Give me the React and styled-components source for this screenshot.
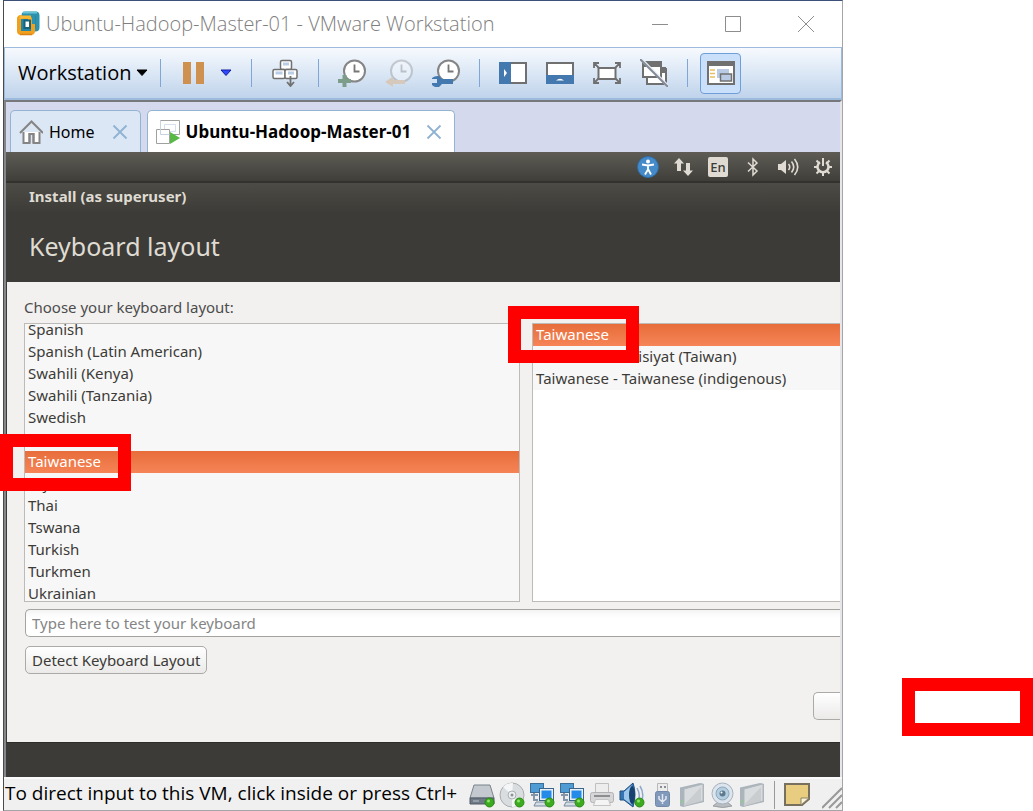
import React from "react";
import styled, { createGlobalStyle, css } from "styled-components";

const UI = '"Open Sans", "Noto Sans", sans-serif';
const GUEST = '"Noto Sans", "Open Sans", sans-serif';

const GlobalStyle = createGlobalStyle`
  *, *::before, *::after { box-sizing: border-box; }
  body { margin: 0; background: #fff; font-family: ${UI}; color: #000; }
  button, input { font: inherit; margin: 0; }
  svg { display: block; flex: none; }
`;

const Page = styled.main`
  display: grid;
  grid-template-columns: minmax(0, 1fr) 190px;
  min-height: 100vh;
  padding-left: 3px;
`;

const Window = styled.section`
  display: flex;
  flex-direction: column;
  border: 1px solid #a3a5a8;
  border-top-color: #3c5078;
  border-left-color: #4a4a4a;
`;

const TitleBar = styled.header`
  display: flex;
  align-items: center;
  height: 46px;
  padding-left: 12px;
`;

const Title = styled.h1`
  flex: 1;
  margin: 0 0 0 6px;
  font-size: 20px;
  line-height: 28px;
  font-weight: 300;
  color: #808080;
  white-space: nowrap;
`;

const bareButton = css`
  display: flex;
  align-items: center;
  justify-content: center;
  padding: 0;
  border: 0;
  background: none;
  color: inherit;
`;

const CaptionButton = styled.button`
  ${bareButton}
  width: 73px;
  height: 46px;
`;

const Toolbar = styled.div`
  display: flex;
  align-items: center;
  height: 53px;
  border: 1px solid #9dbbdc;
  border-width: 1px 1px 2px;
  background: linear-gradient(#f7fafe, #dbe7f5 50%, #bfd3eb);
`;

const ToolGroup = styled.div`
  display: flex;
  align-items: center;
  gap: ${(p) => p.$gap || 19}px;
  height: 28px;
  padding: 0 19px;
  border-right: 1px solid #7ea6d6;
`;

const MenuGroup = styled(ToolGroup)`
  padding: 0 12px 0 13px;
`;

const ToolButton = styled.button`
  ${bareButton}
  flex: none;
`;

const MenuButton = styled(ToolButton)`
  gap: 5px;
  font-size: 20px;
  line-height: 28px;
`;

const PressedButton = styled(ToolButton)`
  width: 41px;
  height: 41px;
  margin-left: 12px;
  border: 1px solid #6f9fd8;
  border-radius: 4px;
  background: #c9dffa;
`;

const Client = styled.div`
  display: flex;
  flex: 1;
  flex-direction: column;
  border-top: 2px solid #77787c;
  border-left: 2px solid #85868a;
  border-right: 2px solid #e6e6e8;
`;

const TabStrip = styled.nav`
  display: flex;
  align-items: flex-end;
  gap: 6px;
  height: 50px;
  padding-left: 4px;
  background: #d4d9ed;
`;

const Tab = styled.div`
  display: flex;
  align-items: center;
  height: 42px;
  padding: 0 12px 0 8px;
  border: 1px solid #93b3d2;
  border-bottom: 0;
  border-radius: 5px 5px 0 0;
  background: ${(p) => (p.$active ? "#fff" : "#dbe7f5")};
`;

const TabLabel = styled.a`
  margin: 0 ${(p) => (p.$active ? 15 : 17)}px 0 6px;
  font-family: ${GUEST};
  font-size: ${(p) => (p.$active ? 17 : 16)}px;
  line-height: 24px;
  font-weight: ${(p) => (p.$active ? 700 : 400)};
  color: #000;
  text-decoration: none;
  white-space: nowrap;
`;

const GuestScreen = styled.div`
  display: flex;
  flex: 1;
  flex-direction: column;
  font-family: ${GUEST};
  font-size: 15px;
  line-height: 22px;
  color: #3c3b37;
  background: #3c3b37;
`;

const GuestPanel = styled.div`
  display: flex;
  align-items: center;
  justify-content: flex-end;
  gap: 13px;
  height: 31px;
  padding-right: 6px;
  border-bottom: 2px solid #33322e;
  background: linear-gradient(#5e5c55, #3f3e39);
`;

const InstallerHeader = styled.div`
  height: 99px;
  padding: 2px 23px 0;
  background: linear-gradient(#4c4b45, #3c3b37 30px);
  color: #dfdbd2;
`;

const InstallerTitle = styled.div`
  font-weight: 700;
`;

const StepTitle = styled.h2`
  margin: 20px 0 0;
  font-size: 25px;
  line-height: 38px;
  font-weight: 400;
`;

const InstallerBody = styled.div`
  display: flex;
  flex: 1;
  flex-direction: column;
  align-items: flex-start;
  margin-left: 1px;
  padding: 14px 0 0 17px;
  background: #f2f1f0;
`;

const FieldLabel = styled.div`
  margin-bottom: 5px;
  color: #4c4c4c;
`;

const Lists = styled.div`
  display: grid;
  grid-template-columns: 496px minmax(0, 1fr);
  gap: 12px;
  width: 100%;
`;

const ListColumn = styled.div`
  position: relative;
  height: 279px;
`;

const Option = styled.li`
  display: flex;
  align-items: center;
  height: 22px;
  padding: 0 3px 2px;
  line-height: 20px;
  white-space: nowrap;
  background: ${(p) =>
    p["aria-selected"] ? "linear-gradient(#e76d3b, #f68456)" : "#f7f7f7"};
  color: ${(p) => (p["aria-selected"] ? "#fff" : "#3c3b37")};
`;

const ListBox = styled.ul`
  height: 100%;
  margin: 0;
  padding: 0;
  list-style: none;
  border: 1px solid #bdbbb8;
  background: #fff;
  ${(p) => p.$open && "border-right: 0;"}
  ${(p) =>
    p.$scrolled &&
    css`
      ${Option}:first-child { height: 17px; align-items: flex-end; }
      ${Option}:last-child { height: 18px; align-items: flex-start; }
    `}
`;

const Marker = styled.div`
  width: 131px;
  height: ${(p) => p.$height || 57}px;
  border: 13px solid #f00;
  pointer-events: none;
`;

const ListMarker = styled(Marker)`
  position: absolute;
  left: -24px;
  top: ${(p) => p.$top}px;
`;

const TryOut = styled.div`
  display: flex;
  flex-direction: column;
  align-items: flex-start;
  gap: 9px;
  width: 100%;
  padding: 7px 0 0 1px;
`;

const TestInput = styled.input`
  width: 100%;
  height: 28px;
  padding: 0 6px;
  border: 1px solid #a5a3a0;
  border-right: 0;
  border-radius: 5px 0 0 5px;
  background: linear-gradient(#f4f4f4, #fff 8px);
  outline: 0;
  &::placeholder { color: #858585; opacity: 1; }
`;

const GuestButton = styled.button`
  height: 28px;
  padding: 0 6px;
  border: 1px solid #acaaa7;
  border-radius: 5px;
  background: linear-gradient(#fff, #ebeae9);
  color: #3c3b37;
  line-height: 20px;
  white-space: nowrap;
`;

const CutButton = styled(GuestButton)`
  align-self: flex-end;
  width: 27px;
  margin-top: 18px;
  border-right: 0;
  border-radius: 5px 0 0 5px;
`;

const GuestFooter = styled.div`
  height: 35px;
  border-top: 1px solid #2e2d2a;
`;

const StatusBar = styled.footer`
  display: flex;
  align-items: center;
  height: 33px;
  padding-left: 1px;
  border-top: 2px solid #fafafa;
  background: #f0f0f0;
`;

const StatusText = styled.div`
  flex: 1;
  min-width: 0;
  padding-bottom: 3px;
  font-size: 19px;
  line-height: 28px;
  white-space: nowrap;
`;

const Devices = styled.div`
  display: flex;
  gap: 4px;
`;

const NoteArea = styled.div`
  display: flex;
  align-items: center;
  height: 28px;
  margin-left: 9px;
  padding-left: 9px;
  border-left: 1px solid #999;
  gap: 12px;
`;

const Aside = styled.aside`
  display: flex;
  flex-direction: column;
  justify-content: flex-end;
  align-items: flex-end;
  padding-bottom: 75px;
`;

const Icon = ({ w = 28, h = 28, children, ...rest }) => (
  <svg width={w} height={h} viewBox={`0 0 ${w} ${h}`} fill="none" aria-hidden="true" {...rest}>
    {children}
  </svg>
);

const Caret = ({ fill, stroke }) => (
  <Icon w={12} h={8}><path d="M1 1h10L6 6.500Z" fill={fill} stroke={stroke} strokeLinejoin="round" /></Icon>
);

const Logo = () => (
  <Icon w={24} h={26}>
    <rect x="7.500" y="2.500" width="14" height="16" rx="2" fill="#1f7f9b" stroke="#2d92ae" strokeWidth="4" />
    <path d="M7 1.500h14" stroke="#6cc3d8" strokeWidth="2" />
    <rect x="3" y="6" width="14" height="16" rx="2" fill="#2687a4" stroke="#f0a01c" strokeWidth="4" />
    <path d="M4 23.500h12" stroke="#d98112" strokeWidth="1.500" />
    <path d="M6 5h11.500v8" stroke="#2d92ae" strokeWidth="3" />
    <path d="M5 8V6h8.500v12" stroke="#f8b733" strokeWidth="3" />
    <rect x="8.500" y="9.500" width="5.500" height="7.500" fill="#fff" stroke="#17637b" strokeWidth="2" />
  </Icon>
);

const Clock = ({ faded, children }) => (
  <Icon>
    <g opacity={faded ? 0.35 : 1}>
      <circle cx="16.500" cy="12" r="10.500" fill="#fff" stroke="#858585" strokeWidth="2" />
      <path d="M16.500 5.500v7h5" stroke="#777" strokeWidth="1.800" />
    </g>
    {children}
  </Icon>
);

const TabClose = () => (
  <Icon w={16} h={16}><path d="M1.500 1.500l13 13M14.500 1.500l-13 13" stroke="#8fb2d2" strokeWidth="1.800" /></Icon>
);

const Dot = () => (
  <>
    <circle cx="20.500" cy="20.500" r="4.500" fill="#3cab1f" stroke="#2c8a16" />
    <circle cx="19.500" cy="19" r="1.500" fill="#8de36c" />
  </>
);

const Network = () => (
  <Icon w={26} h={26}>
    <path d="M5 10v8h4M2 13h7" stroke="#8496a8" strokeWidth="2" />
    <rect x="1.500" y="1.500" width="13" height="9" fill="#4f9cd4" stroke="#3c6d95" />
    <path d="M7 20h12l3 4H5Z" fill="#d4dde5" stroke="#78899a" />
    <rect x="10.500" y="6.500" width="14" height="12" fill="#e6eff7" stroke="#3a658c" />
    <rect x="12.500" y="8.500" width="10" height="8" fill="#258be8" />
    <Dot />
  </Icon>
);

const Panel = () => (
  <Icon w={26} h={26}>
    <path d="M1 5.500L21 1l4 1v18L4 25l-3-1Z" fill="#a9b4bc" />
    <path d="M5 7l19-5v17L5 24Z" fill="#d9dcde" stroke="#b0b7bb" />
    <path d="M5 23L22 5v14L5 24Z" fill="#cacdcf" />
    <path d="M3 18v3" stroke="#8fc995" strokeWidth="2" />
  </Icon>
);

const leftItems = ["Spanish", "Spanish (Latin American)", "Swahili (Kenya)", "Swahili (Tanzania)", "Swedish", "Switzerland", "Taiwanese", "Tajik", "Thai", "Tswana", "Turkish", "Turkmen", "Ukrainian"];
const rightItems = ["Taiwanese", "Taiwanese - Saisiyat (Taiwan)", "Taiwanese - Taiwanese (indigenous)"];

const KeyboardList = ({ label, items, open, scrolled, markerTop }) => (
  <ListColumn>
    <ListBox role="listbox" aria-label={label} $open={open} $scrolled={scrolled}>
      {items.map((item) => (
        <Option key={item} role="option" aria-selected={item === "Taiwanese"}>{item}</Option>
      ))}
    </ListBox>
    <ListMarker $top={markerTop} />
  </ListColumn>
);

export default function App() {
  return (
    <>
      <GlobalStyle />
      <Page>
        <Window>
          <TitleBar>
            <Logo />
            <Title>Ubuntu-Hadoop-Master-01 - VMware Workstation</Title>
            <CaptionButton aria-label="Minimize"><Icon w={16} h={16}><path d="M0 8.500h16" stroke="#8d8d8d" /></Icon></CaptionButton>
            <CaptionButton aria-label="Maximize"><Icon w={16} h={16}><path d="M.5.5h15v15H.5Z" stroke="#8d8d8d" /></Icon></CaptionButton>
            <CaptionButton aria-label="Close"><Icon w={16} h={16}><path d="M0 0l16 16M16 0L0 16" stroke="#8d8d8d" /></Icon></CaptionButton>
          </TitleBar>

          <Toolbar role="toolbar">
            <MenuGroup>
              <MenuButton>Workstation<Caret fill="#000" stroke="#000" /></MenuButton>
            </MenuGroup>
            <ToolGroup $gap={12}>
              <ToolButton aria-label="Suspend">
                <Icon><path d="M3 3h8v22H3ZM16 3h8v22h-8Z" fill="#cf914f" /></Icon>
              </ToolButton>
              <ToolButton aria-label="Power options"><Caret fill="#2f49ff" stroke="#101c9c" /></ToolButton>
            </ToolGroup>
            <ToolGroup>
              <ToolButton aria-label="Send Ctrl+Alt+Del">
                <Icon>
                  <g fill="#fff" stroke="#707070" strokeWidth="1.500">
                    <rect x="9.500" y="1.500" width="11" height="9" rx="1.500" />
                    <rect x="2" y="10.500" width="12" height="9" rx="1.500" />
                    <rect x="14" y="10.500" width="12" height="9" rx="1.500" />
                  </g>
                  <path d="M12 5h6M4.500 14h7M17 14h6" stroke="#b9cde6" strokeWidth="3" />
                  <path d="M19.500 17v9M16 23l3.500 4 3.500-4" stroke="#707070" strokeWidth="1.800" />
                </Icon>
              </ToolButton>
            </ToolGroup>
            <ToolGroup>
              <ToolButton aria-label="Take snapshot">
                <Clock><path d="M6.500 16v12M0 22h13" stroke="#7d9d8b" strokeWidth="4" /></Clock>
              </ToolButton>
              <ToolButton aria-label="Revert to snapshot">
                <Clock faded><path d="M0 23l8-5.500V21h12v4H8v3Z" fill="#d6c9bb" /></Clock>
              </ToolButton>
              <ToolButton aria-label="Manage snapshots">
                <Clock>
                  <path d="M0 20h5v4H0v2q3 3 7 2l3-3h11v-5H10L7 17Q3 16.500 0 19Z" fill="#4479b0" />
                </Clock>
              </ToolButton>
            </ToolGroup>
            <ToolGroup>
              <ToolButton aria-label="Library">
                <Icon>
                  <rect x="1" y="4" width="26" height="20" fill="#fff" stroke="#707070" strokeWidth="2" />
                  <path d="M0 3h12v22H0Z" fill="#4479b0" />
                  <path d="M5 10l3 4-3 4Z" fill="#fff" />
                </Icon>
              </ToolButton>
              <ToolButton aria-label="Thumbnail bar">
                <Icon>
                  <rect x="1" y="4" width="26" height="20" fill="#fff" stroke="#707070" strokeWidth="2" />
                  <path d="M0 16h28v9H0Z" fill="#4479b0" />
                  <path d="M10 21.500q4-3.500 8 0Z" fill="#fff" />
                </Icon>
              </ToolButton>
              <ToolButton aria-label="Full screen">
                <Icon>
                  <rect x="5.500" y="9" width="17" height="11" fill="#fff" stroke="#707070" strokeWidth="2" />
                  <path d="M1 9V4h5M1 4l5 5M22 4h5v5M27 4l-5 5M1 19v5h5M1 24l5-5M22 24h5v-5M27 24l-5-5" stroke="#707070" strokeWidth="1.800" />
                </Icon>
              </ToolButton>
              <ToolButton aria-label="Unity">
                <Icon>
                  <rect x="7" y="10" width="19" height="15" fill="#fff" stroke="#707070" strokeWidth="2" />
                  <path d="M21 8h5v6h-5Z" fill="#707070" />
                  <rect x="3" y="4" width="18" height="14" fill="#fff" stroke="#707070" strokeWidth="2" />
                  <path d="M2 2h20v6H2Z" fill="#707070" />
                  <path d="M2 1l26 26" stroke="#e6edf6" strokeWidth="3" />
                  <path d="M0 0l28 28" stroke="#848b96" strokeWidth="2" />
                </Icon>
              </ToolButton>
            </ToolGroup>
            <PressedButton aria-label="Console view" aria-pressed="true">
              <Icon>
                <rect x="1" y="3" width="26" height="22" fill="#fff" stroke="#707070" strokeWidth="2" />
                <path d="M0 2h28v5H0Z" fill="#707070" />
                <path d="M3 11h5M3 14.500h5M3 18h5" stroke="#eabe62" strokeWidth="1.500" />
                <path d="M10 10h12v9H10Z" fill="#b9cbe4" />
                <rect x="13.500" y="15" width="11" height="7" fill="#b9cbe4" stroke="#707070" strokeWidth="1.500" />
              </Icon>
            </PressedButton>
          </Toolbar>

          <Client>
            <TabStrip>
              <Tab>
                <Icon w={24} h={24}>
                  <path d="M4.500 12v11h6v-9h4v9h6V12" fill="#fff" stroke="#858585" strokeWidth="2" />
                  <path d="M1 13L12.500 1.500 24 13" stroke="#858585" strokeWidth="2" />
                  <path d="M10.500 23v-9h4v9" stroke="#858585" strokeWidth="2" />
                </Icon>
                <TabLabel href="#home">Home</TabLabel>
                <ToolButton aria-label="Close Home"><TabClose /></ToolButton>
              </Tab>
              <Tab $active>
                <Icon w={24} h={26}>
                  <path d="M4.500 1.500h19v14h-19Z" fill="#fff" stroke="#a0a0a0" />
                  <path d="M8.500 5.500h11v7h-11Z" stroke="#d5dfed" />
                  <path d="M.5 10.500h13v14H.5Z" fill="#fff" stroke="#a0a0a0" />
                  <path d="M4.500 1.500v14h9" stroke="#c8d3e2" />
                  <path d="M14 13v12l10-6Z" fill="#58b947" />
                </Icon>
                <TabLabel $active href="#vm">Ubuntu-Hadoop-Master-01</TabLabel>
                <ToolButton aria-label="Close Ubuntu-Hadoop-Master-01"><TabClose /></ToolButton>
              </Tab>
            </TabStrip>

            <GuestScreen>
              <GuestPanel>
                <Icon w={22} h={22}>
                  <circle cx="11" cy="11" r="10.500" fill="#458bca" stroke="#2e6da5" />
                  <circle cx="11" cy="5.500" r="2" fill="#fff" />
                  <path d="M5 8.500l6 1 6-1M11 9v4.500l-3 5M11 13l3 5.500" stroke="#fff" strokeWidth="1.800" />
                </Icon>
                <Icon w={22} h={22}>
                  <path d="M7 2l5 5.500H9V15H5V7.500H2ZM16 20l-5-5.500h3V7h4v7.500h3Z" fill="#dfdbd2" />
                </Icon>
                <Icon w={22} h={22}>
                  <rect x="1" y="1" width="20" height="20" rx="2" fill="#dfdbd2" />
                  <text x="11" y="16" textAnchor="middle" fontSize="13" fontWeight="500" fill="#3c3b37">En</text>
                </Icon>
                <Icon w={22} h={22}>
                  <path d="M6 6.500l9 8.500-4 4V3l4 4-9 8.500" stroke="#dfdbd2" strokeWidth="1.500" />
                </Icon>
                <Icon w={22} h={22}>
                  <path d="M1 8h3l5-4v14l-5-4H1Z" fill="#dfdbd2" />
                  <path d="M11.500 8q2.500 3 0 6M14.500 5.500q4.500 5.500 0 11M17.500 3q6.500 8 0 16" stroke="#dfdbd2" strokeWidth="1.600" />
                </Icon>
                <Icon w={22} h={22}>
                  <path d="M8 6.200a5.500 5.500 0 1 0 6 0" stroke="#dfdbd2" strokeWidth="2.500" />
                  <path d="M11 2v8M4.500 4.500l3 3M17.500 4.500l-3 3M2 11h4M20 11h-4M4.500 17.500l3-3M17.500 17.500l-3-3M11 20v-4" stroke="#dfdbd2" strokeWidth="2" />
                </Icon>
              </GuestPanel>
              <InstallerHeader>
                <InstallerTitle>Install (as superuser)</InstallerTitle>
                <StepTitle>Keyboard layout</StepTitle>
              </InstallerHeader>
              <InstallerBody>
                <FieldLabel>Choose your keyboard layout:</FieldLabel>
                <Lists>
                  <KeyboardList label="Keyboard layout" items={leftItems} scrolled markerTop={111} />
                  <KeyboardList label="Keyboard variant" items={rightItems} open markerTop={-17} />
                </Lists>
                <TryOut>
                  <TestInput aria-label="Test your keyboard" placeholder="Type here to test your keyboard" />
                  <GuestButton>Detect Keyboard Layout</GuestButton>
                </TryOut>
                <CutButton aria-label="Back" />
              </InstallerBody>
              <GuestFooter />
            </GuestScreen>
          </Client>

          <StatusBar>
            <StatusText>To direct input to this VM, click inside or press Ctrl+</StatusText>
            <Devices>
              <Icon w={26} h={26}>
                <path d="M5 3h16l4 13H1Z" fill="#c3c9ce" stroke="#7b848c" />
                <path d="M1 16h24v6H1Z" fill="#6e7a86" stroke="#505b66" />
                <path d="M4 19h6" stroke="#b8c2cb" />
                <Dot />
              </Icon>
              <Icon w={26} h={26}>
                <circle cx="13" cy="13" r="12" fill="#d9dde0" stroke="#a9adb1" />
                <path d="M13 13L4 5A12 12 0 0 1 14 1ZM13 13l9 9a12 12 0 0 1-9 3Z" fill="#f4f6f8" />
                <circle cx="13" cy="13" r="4" fill="#eceef0" stroke="#aab0b5" />
                <circle cx="13" cy="13" r="1.500" fill="#8c9298" />
                <Dot />
              </Icon>
              <Network />
              <Network />
              <Icon w={26} h={26}>
                <path d="M6.500 1.500h13V13h-13Z" fill="#ededed" stroke="#bfbfbf" />
                <rect x="1.500" y="10.500" width="23" height="10" rx="2" fill="#d6d6d8" stroke="#b2b2b5" />
                <path d="M5 14h16" stroke="#8d8d90" strokeWidth="2" />
                <path d="M6.500 17.500h13l2 6h-17Z" fill="#f4f4f4" stroke="#c4c4c4" />
              </Icon>
              <Icon w={26} h={26}>
                <path d="M1 9h4l9-8q4 11 0 24l-9-7H1Z" fill="#3474b5" stroke="#21507f" />
                <path d="M5 10l8-7q-4 10 0 20l-8-6Z" fill="#9cc6ec" />
                <ellipse cx="13" cy="13" rx="3" ry="9" fill="#17426f" />
                <path d="M18 6q4 7 1 13M21 4q5 8 1 17" stroke="#8fa9cc" strokeWidth="1.500" />
                <Dot />
              </Icon>
              <Icon w={26} h={26}>
                <path d="M8.500 1.500h10V10h-10Z" fill="#ececec" stroke="#b9b9bb" />
                <path d="M11 5h2M15 5h2" stroke="#8a8d91" strokeWidth="2" />
                <rect x="6.500" y="9.500" width="14" height="15" rx="2" fill="#8199bb" stroke="#7289aa" />
                <path d="M13.500 12v10M10 14v3l3.500 3 3.500-3v-3" stroke="#e2e8f0" strokeWidth="1.500" />
              </Icon>
              <Panel />
              <Icon w={26} h={26}>
                <path d="M9 20h9l5 4q-9 3-19 0Z" fill="#b9bdc1" stroke="#999ea3" />
                <circle cx="13.500" cy="11.500" r="10.500" fill="#dce5ed" stroke="#a6b2bd" />
                <circle cx="13.500" cy="11.500" r="6.500" fill="#b4cddf" stroke="#8ca8bd" />
                <circle cx="13.500" cy="11.500" r="3" fill="#5c7990" />
                <circle cx="12.500" cy="10.500" r="1" fill="#fff" />
              </Icon>
              <Panel />
            </Devices>
            <NoteArea>
              <Icon w={26} h={24}>
                <path d="M1 1h24v15l-7 6H1Z" fill="#e8cc80" stroke="#77705f" strokeWidth="2" />
                <path d="M25 15h-8v7Z" fill="#fbf3d6" stroke="#8c8469" />
              </Icon>
              <Icon w={20} h={28}>
                <path d="M0 27L20 7M7 27L20 14M14 27L20 21" stroke="#999" strokeWidth="2" />
              </Icon>
            </NoteArea>
          </StatusBar>
        </Window>
        <Aside><Marker $height={58} /></Aside>
      </Page>
    </>
  );
}
